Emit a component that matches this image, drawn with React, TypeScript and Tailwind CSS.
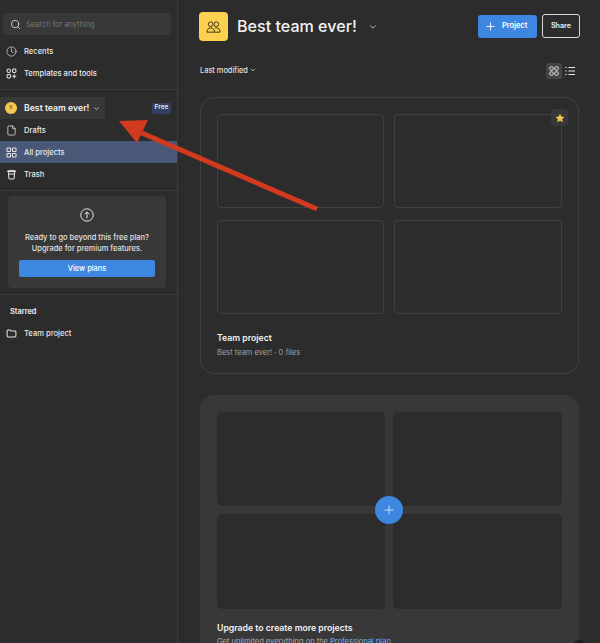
import React from "react";
import { Search, Clock, File } from "lucide-react";

const Grid4 = ({ className = "" }: { className?: string }) => (
  <svg viewBox="0 0 12 12" fill="none" stroke="currentColor" strokeWidth="1.1" className={className}>
    <rect x="1" y="1" width="4" height="4" rx="1" />
    <rect x="7" y="1" width="4" height="4" rx="1" />
    <rect x="1" y="7" width="4" height="4" rx="1" />
    <rect x="7" y="7" width="4" height="4" rx="1" />
  </svg>
);

const Templates = ({ className = "" }: { className?: string }) => (
  <svg viewBox="0 0 12 12" fill="none" stroke="currentColor" strokeWidth="1.1" className={className}>
    <circle cx="3" cy="3" r="1.9" />
    <rect x="7.2" y="1.2" width="3.6" height="3.6" rx="1" />
    <rect x="1.2" y="7.2" width="3.6" height="3.6" rx="1" />
    <path d="M9 6.8v4.4M6.8 9h4.4" />
  </svg>
);

const NavRow = ({ icon, label, active }: { icon: React.ReactNode; label: string; active?: boolean }) => (
  <div className={`flex h-[22px] items-center pl-[6px] ${active ? "bg-[#4a5878]" : ""}`}>
    <span className="flex w-[18px] items-center justify-start text-[#e8e8e8]">{icon}</span>
    <span className="pt-[1px] text-[7.6px] font-medium text-[#e8e8e8]">{label}</span>
  </div>
);

const Divider = () => <div className="h-px bg-[#3c3c3c]" />;

const Sidebar = () => (
  <aside className="flex h-full w-[178px] shrink-0 flex-col border-r border-[#3c3c3c]">
    <div className="px-[3px] pt-[13px]">
      <div className="flex h-[22px] w-[168px] items-center gap-[5px] rounded-[4px] bg-[#383838] px-[7px]">
        <Search size={11} strokeWidth={1.7} className="text-[#e8e8e8]" />
        <span className="pt-[1px] text-[7.4px] text-[#777777]">Search for anything</span>
      </div>
    </div>
    <div className="pt-[5px]">
      <NavRow icon={<Clock size={11} strokeWidth={1.5} />} label="Recents" />
      <NavRow icon={<Templates className="h-[11px] w-[11px]" />} label="Templates and tools" />
    </div>
    <div className="mt-[5px]">
      <Divider />
    </div>
    <div className="flex items-center justify-between pr-[6px] pt-[7px]">
      <div className="flex h-[22px] w-[105px] items-center rounded-r-[3px] bg-[#383838] pl-[5px]">
        <span className="flex h-[12px] w-[12px] items-center justify-center rounded-full bg-[#f5c94f]">
          <span className="text-[5px] font-semibold text-[#8a6d1d]">B</span>
        </span>
        <span className="ml-[7px] pt-[1px] text-[8.7px] font-semibold whitespace-nowrap text-[#f0f0f0]">Best team ever!</span>
        <svg viewBox="0 0 10 10" fill="none" stroke="currentColor" strokeWidth="1.2" className="ml-[4px] h-[7px] w-[7px] text-[#d0d0d0]">
          <path d="M2 3.5 5 6.5 8 3.5" />
        </svg>
      </div>
      <span className="flex h-[11px] w-[19px] items-center justify-center rounded-[2px] bg-[#34405f] text-[6.5px] font-semibold text-[#e8e8e8]">Free</span>
    </div>
    <div>
      <NavRow icon={<File size={11} strokeWidth={1.6} />} label="Drafts" />
      <NavRow active icon={<Grid4 className="h-[11px] w-[11px]" />} label="All projects" />
      <NavRow
        icon={
          <svg viewBox="0 0 12 12" fill="none" stroke="currentColor" strokeWidth="1.1" className="h-[11px] w-[11px]">
            <path d="M1.500 2.800c0-1.800 9-1.800 9 0M1.500 2.800h9M2.500 2.800l.6 7a1.200 1.200 0 0 0 1.200 1.100h3.400a1.200 1.200 0 0 0 1.200-1.100l.6-7M3 5.500h6" />
          </svg>
        }
        label="Trash"
      />
    </div>
    <div className="mt-[5px]">
      <Divider />
    </div>
    <div className="px-[8px] pt-[5px]">
      <div className="flex h-[92px] w-[158px] flex-col items-center rounded-[4px] bg-[#383838] px-[11px] pt-[12px]">
        <svg viewBox="0 0 14 14" fill="none" stroke="currentColor" strokeWidth="1" className="h-[14px] w-[14px] text-[#e8e8e8]">
          <circle cx="7" cy="7" r="6.2" />
          <path d="M7 10.3V4M4.600 6.300 7 3.900l2.400 2.400" />
        </svg>
        <p className="mt-[10px] text-center text-[7.5px] leading-[11px] font-medium whitespace-nowrap text-[#e0e0e0]">
          Ready to go beyond this free plan?
          <br />
          Upgrade for premium features.
        </p>
        <div className="mt-[6px] flex h-[17px] w-[136px] shrink-0 items-center justify-center rounded-[2px] bg-[#3d87e0] pt-[1px] text-[7.4px] font-medium text-white">
          View plans
        </div>
      </div>
    </div>
    <div className="mt-[6px]">
      <Divider />
    </div>
    <div className="pl-[10px] pt-[11px] text-[7.4px] leading-[11px] font-semibold text-[#f0f0f0]">Starred</div>
    <div className="pt-[5px]">
      <NavRow
        icon={
          <svg viewBox="0 0 12 12" fill="none" stroke="currentColor" strokeWidth="1.1" className="h-[11px] w-[11px]">
            <path d="M1.200 3.200a1 1 0 0 1 1-1h2.200l1 1.200h4.400a1 1 0 0 1 1 1v4.400a1 1 0 0 1-1 1H2.200a1 1 0 0 1-1-1z" />
          </svg>
        }
        label="Team project"
      />
    </div>
  </aside>
);

const Header = () => (
  <div className="flex items-start justify-between pr-[20px] pl-[21px] pt-[12px]">
    <div className="flex items-center">
      <div className="flex h-[29px] w-[29px] items-center justify-center rounded-[4px] bg-[#fcd14f]">
        <svg viewBox="0 0 16 14" fill="none" stroke="#3a3015" strokeWidth="1" className="h-[14px] w-[15px]">
          <circle cx="5" cy="4" r="2.500" />
          <circle cx="11" cy="4" r="2.500" />
          <path d="M1 12.500c0-3 1.500-4.500 4-4.500s4 1.500 4 4.500zM9.500 8.200c.5-.2 1-.2 1.500-.2 2.500 0 4 1.500 4 4.500H9" />
        </svg>
      </div>
      <span className="ml-[9px] text-[16.1px] font-medium whitespace-nowrap text-[#f2f2f2]">Best team ever!</span>
      <svg viewBox="0 0 10 10" fill="none" stroke="currentColor" strokeWidth="1.1" className="ml-[12px] h-[8px] w-[8px] text-[#cccccc]">
        <path d="M1.500 3 5 6.500 8.500 3" />
      </svg>
    </div>
    <div className="flex items-center gap-[5px] pt-[2px]">
      <div className="flex h-[23px] w-[59px] items-center rounded-[3px] bg-[#3d87e0] pl-[8px] text-[7.4px] font-semibold text-white">
        <svg viewBox="0 0 10 10" fill="none" stroke="currentColor" strokeWidth="1" className="h-[9px] w-[9px]">
          <path d="M5 .5v9M.5 5h9" />
        </svg>
        <span className="ml-[7px]">Project</span>
      </div>
      <div className="flex h-[24px] w-[38px] items-center justify-center rounded-[3px] border-[1.5px] border-[#d8d8d8] text-[7.2px] font-semibold text-[#f0f0f0]">
        Share
      </div>
    </div>
  </div>
);

const Toolbar = () => (
  <div className="mt-[21px] flex h-[17px] items-center justify-between pr-[25px] pl-[22px]">
    <div className="flex items-center text-[7.4px] font-medium text-[#e0e0e0]">
      Last modified
      <svg viewBox="0 0 10 10" fill="none" stroke="currentColor" strokeWidth="1.2" className="ml-[2px] h-[6px] w-[6px]">
        <path d="M1.500 3 5 6.500 8.500 3" />
      </svg>
    </div>
    <div className="flex items-center gap-[3px]">
      <div className="flex h-[16px] w-[16px] items-center justify-center rounded-[2px] bg-[#444444] text-[#e8e8e8]">
        <Grid4 className="h-[10px] w-[10px]" />
      </div>
      <svg viewBox="0 0 10 10" fill="none" stroke="currentColor" strokeWidth="1" className="h-[10px] w-[10px] text-[#e8e8e8]">
        <path d="M3.500 1.500H10M3.500 5H10M3.500 8.500H10M.3 1.500h1.400M.3 5h1.400M.3 8.500h1.400" />
      </svg>
    </div>
  </div>
);

const TeamCard = () => (
  <div className="relative ml-[22px] mt-[18px] h-[277px] w-[379px] rounded-[14px] border border-[#3f3f3f] px-[16px] pt-[16px]">
    <div className="grid grid-cols-[167px_168px] grid-rows-[94px_94px] gap-x-[10px] gap-y-[12px]">
      {[0, 1, 2, 3].map((i) => (
        <div key={i} className="rounded-[4px] border border-[#404040]" />
      ))}
    </div>
    <div className="mt-[18px] text-[8.7px] leading-[12px] font-semibold text-[#f0f0f0]">Team project</div>
    <div className="mt-[3px] text-[7.5px] leading-[11px] text-[#a0a0a0]">Best team ever! · 0 files</div>
    <div className="absolute top-[11px] right-[10px] flex h-[17px] w-[17px] items-center justify-center rounded-[4px] bg-[#383838]">
      <svg viewBox="0 0 12 12" className="h-[10px] w-[10px]" fill="#f5c94f">
        <path d="M6 .8 7.600 4.200l3.700.5-2.700 2.600.7 3.700L6 9.200 2.700 11l.7-3.700L.7 4.700l3.700-.5z" />
      </svg>
    </div>
  </div>
);

const UpgradeCard = () => (
  <div className="relative ml-[22px] mt-[21px] h-[300px] w-[379px] rounded-[14px] bg-[#383838] px-[17px] pt-[17px]">
    <div className="relative grid grid-cols-[168px_169px] grid-rows-[94px_95px] gap-x-[8px] gap-y-[8px]">
      {[0, 1, 2, 3].map((i) => (
        <div key={i} className="rounded-[5px] bg-[#2c2c2c]" />
      ))}
      <div className="absolute top-[84px] left-[158px] flex h-[28px] w-[28px] items-center justify-center rounded-full bg-[#3d87e0] text-[#e8f0fb]">
        <svg viewBox="0 0 10 10" fill="none" stroke="currentColor" strokeWidth="0.8" className="h-[10px] w-[10px]">
          <path d="M5 .5v9M.5 5h9" />
        </svg>
      </div>
    </div>
    <div className="mt-[13px] text-[8.7px] leading-[12px] font-semibold text-[#f0f0f0]">Upgrade to create more projects</div>
    <div className="mt-[2px] text-[7.5px] leading-[11px] text-[#b0b0b0]">
      Get unlimited everything on the <span className="text-[#7cb0ee]">Professional plan</span>
    </div>
  </div>
);

export default function App() {
  return (
    <div className="relative flex h-[643px] w-[600px] overflow-hidden bg-[#2c2c2c] font-['Inter',sans-serif] antialiased">
      <Sidebar />
      <main className="min-w-0 flex-1">
        <Header />
        <Toolbar />
        <TeamCard />
        <UpgradeCard />
      </main>
      <div className="absolute top-[640px] left-[572px] h-[15px] w-[15px] rounded-full bg-[#1e1e1e]" />
      <svg className="pointer-events-none absolute top-0 left-0 h-[643px] w-[600px]" viewBox="0 0 600 643">
        <path d="M135 130 317 209" stroke="#d23a1f" strokeWidth="5" fill="none" />
        <path d="M119 121 148 120 137 143z" fill="#d23a1f" />
      </svg>
    </div>
  );
}
